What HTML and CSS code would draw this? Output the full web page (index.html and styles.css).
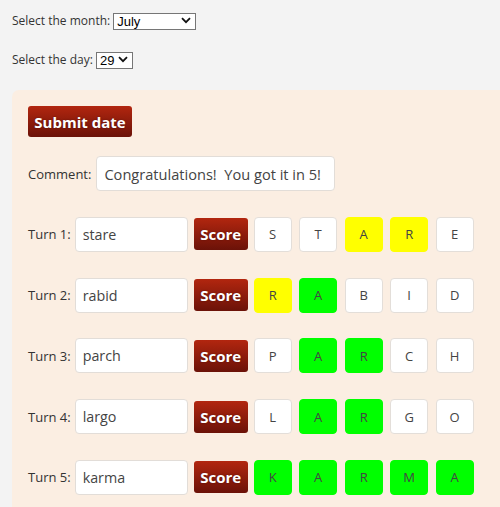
FILE: index.html
```html
<!DOCTYPE html>
<html>
<head>
<meta charset="utf-8">
<link rel="stylesheet" href="styles.css">
</head>
<body>
<div class="field month-field">
  <label class="sel-label">Select the month:</label>
  <span class="sel-wrap month">
    <select class="sel"><option>July</option></select>
    <svg class="chev" width="10" height="7" viewBox="0 0 10 7"><path d="M1 1.2 L5 5.2 L9 1.2" fill="none" stroke="#111" stroke-width="1.8"/></svg>
  </span>
</div>
<div class="field day-field">
  <label class="sel-label">Select the day:</label>
  <span class="sel-wrap day">
    <select class="sel"><option>29</option></select>
    <svg class="chev" width="10" height="7" viewBox="0 0 10 7"><path d="M1 1.2 L5 5.2 L9 1.2" fill="none" stroke="#111" stroke-width="1.8"/></svg>
  </span>
</div>
<div class="panel">
  <button class="btn submit">Submit date</button>
  <div class="row comment-row">
    <span class="lbl">Comment:</span>
    <input class="txt comment" value="Congratulations!  You got it in 5!">
  </div>
  <div class="row turn">
    <span class="lbl">Turn 1:</span>
    <input class="txt guess" value="stare">
    <button class="btn score">Score</button>
    <span class="tile">S</span><span class="tile">T</span><span class="tile y">A</span><span class="tile y">R</span><span class="tile">E</span>
  </div>
  <div class="row turn">
    <span class="lbl">Turn 2:</span>
    <input class="txt guess" value="rabid">
    <button class="btn score">Score</button>
    <span class="tile y">R</span><span class="tile g">A</span><span class="tile">B</span><span class="tile">I</span><span class="tile">D</span>
  </div>
  <div class="row turn">
    <span class="lbl">Turn 3:</span>
    <input class="txt guess" value="parch">
    <button class="btn score">Score</button>
    <span class="tile">P</span><span class="tile g">A</span><span class="tile g">R</span><span class="tile">C</span><span class="tile">H</span>
  </div>
  <div class="row turn">
    <span class="lbl">Turn 4:</span>
    <input class="txt guess" value="largo">
    <button class="btn score">Score</button>
    <span class="tile">L</span><span class="tile g">A</span><span class="tile g">R</span><span class="tile">G</span><span class="tile">O</span>
  </div>
  <div class="row turn">
    <span class="lbl">Turn 5:</span>
    <input class="txt guess" value="karma">
    <button class="btn score">Score</button>
    <span class="tile g">K</span><span class="tile g">A</span><span class="tile g">R</span><span class="tile g">M</span><span class="tile g">A</span>
  </div>
</div>
</body>
</html>
```
FILE: styles.css
```css
html, body {
  margin: 0;
  padding: 0;
  overflow: hidden;
}
body {
  background: #f3f3f3;
  font-family: "Open Sans", "Liberation Sans", sans-serif;
  font-size: 13px;
  color: #333;
  padding: 12px 0 0 12px;
}
.field {
  display: flex;
  align-items: center;
  height: 17px;
}
.day-field {
  margin-top: 22px;
}
.sel-label {
  font-size: 12px;
  margin-right: 3px;
}
.sel-wrap {
  position: relative;
  display: inline-block;
}
.sel {
  appearance: none;
  -webkit-appearance: none;
  font-family: "Liberation Sans", Arial, sans-serif;
  font-size: 13px;
  color: #000;
  background: #fff;
  border: 1px solid #767676;
  border-radius: 0;
  height: 17px;
  padding: 0 0 0 3px;
  margin: 0;
  box-sizing: border-box;
  line-height: 15px;
}
.month .sel { width: 83px; }
.day .sel { width: 37px; }
.chev {
  position: absolute;
  right: 5px;
  top: 5px;
  pointer-events: none;
}
.panel {
  margin-top: 22px;
  margin-right: -40px;
  background: #fbeee2;
  border-radius: 7px 0 0 0;
  padding: 16px 0 20px 16px;
}
.btn {
  font-family: "Open Sans", "Liberation Sans", sans-serif;
  font-weight: 700;
  color: #fff;
  border: none;
  border-radius: 3px;
  background: linear-gradient(#b2260f, #6b1208);
  text-shadow: 0 0 2px rgba(0,0,0,0.35);
  padding: 0;
  cursor: pointer;
}
.submit {
  display: block;
  width: 104px;
  height: 31px;
  font-size: 15px;
}
.row {
  display: flex;
  align-items: center;
}
.comment-row {
  margin-top: 19px;
}
.turn {
  margin-top: 25.75px;
}
.lbl {
  margin-right: 5px;
  color: #333;
}
.turn .lbl {
  margin-right: 4px;
}
.txt {
  font-family: "Open Sans", "Liberation Sans", sans-serif;
  font-size: 14.3px;
  color: #444;
  background: #fff;
  border: 1px solid #e2ddd8;
  border-radius: 4px;
  height: 35px;
  box-sizing: border-box;
  padding: 0 7px;
  margin: 0;
}
.comment {
  width: 239px;
  font-size: 14.6px;
}
.guess {
  width: 113px;
}
.score {
  width: 54px;
  height: 32px;
  font-size: 15px;
  margin-left: 6px;
  margin-right: 6px;
}
.tile {
  width: 38px;
  height: 35px;
  box-sizing: border-box;
  border: 1px solid #e3ded9;
  border-radius: 4px;
  background: #fff;
  display: flex;
  align-items: center;
  justify-content: center;
  font-size: 13px;
  color: #444;
  margin-right: 7.5px;
}
.tile.y {
  background: #ffff00;
  border-color: #ffff00;
}
.tile.g {
  background: #00ff00;
  border-color: #00ff00;
}
```
